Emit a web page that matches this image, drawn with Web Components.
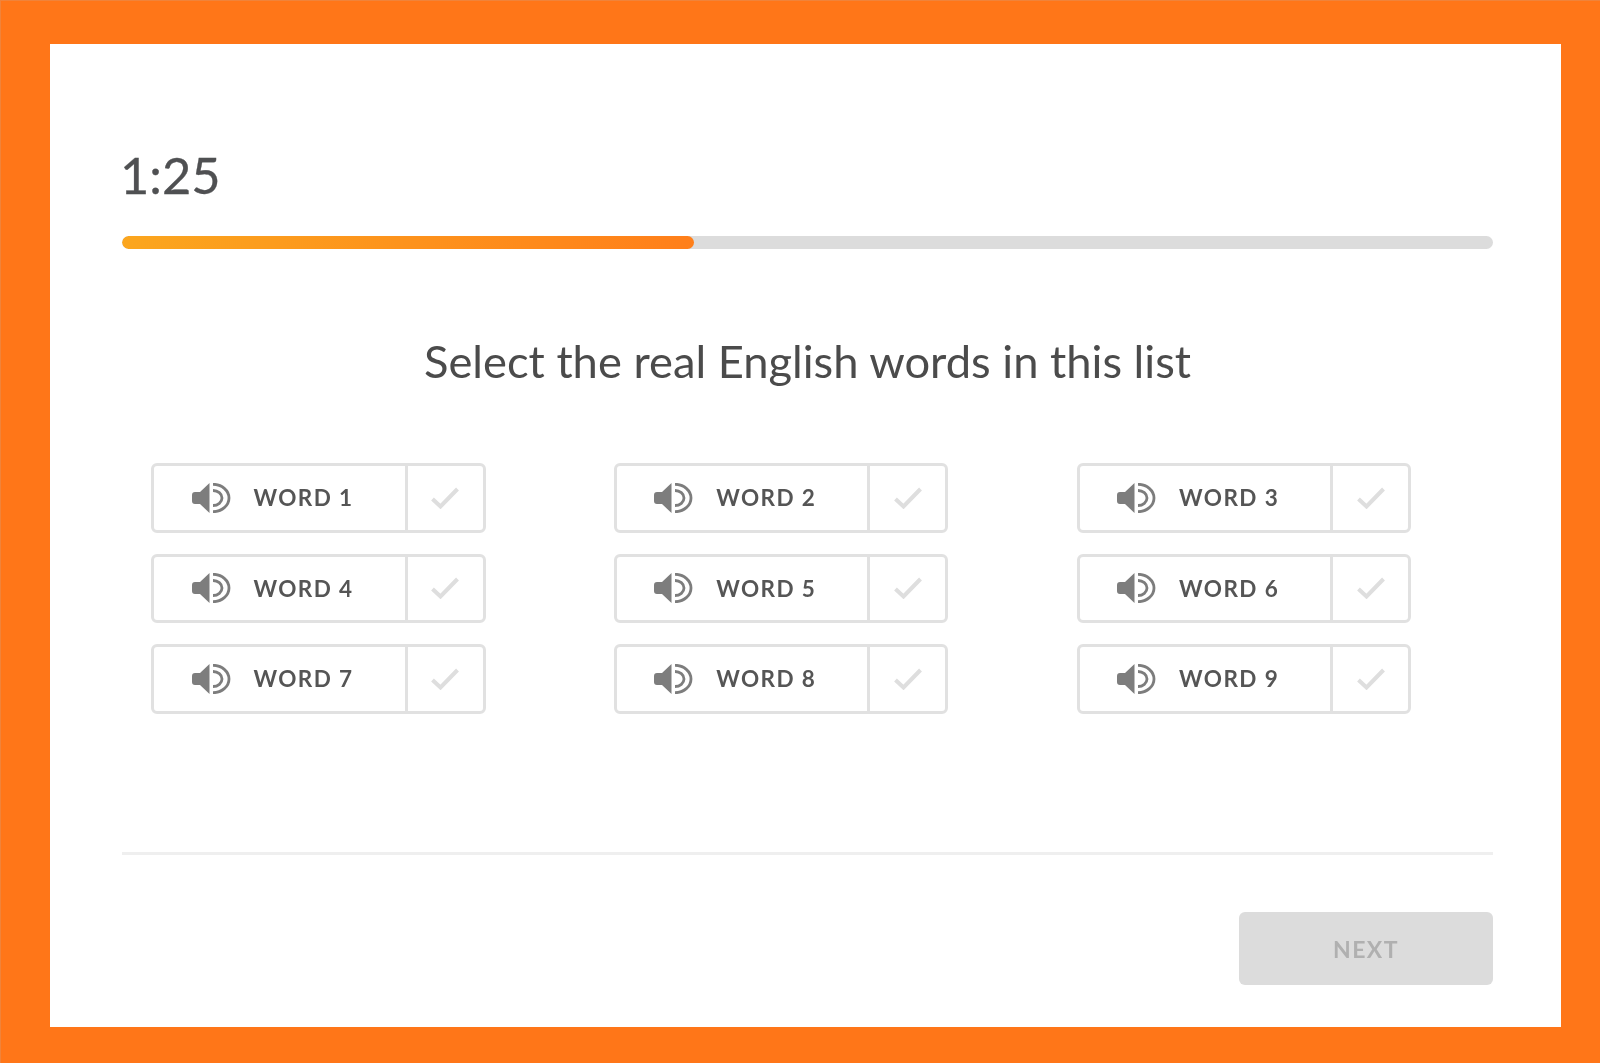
<!DOCTYPE html>
<html lang="en">
<head>
<meta charset="utf-8">
<title>Select the real English words</title>
<style>
  html, body { margin: 0; height: 100%; }
  body { background: #ff7618; font-family: Lato, "Noto Sans", sans-serif; }
</style>
</head>
<body>
<quiz-screen>
  <quiz-timer slot="timer" value="1:25" percent="41.7"></quiz-timer>
  <span slot="title">Select the real English words in this list</span>
  <word-option>WORD 1</word-option>
  <word-option>WORD 2</word-option>
  <word-option>WORD 3</word-option>
  <word-option>WORD 4</word-option>
  <word-option>WORD 5</word-option>
  <word-option>WORD 6</word-option>
  <word-option>WORD 7</word-option>
  <word-option>WORD 8</word-option>
  <word-option>WORD 9</word-option>
  <next-button slot="footer">NEXT</next-button>
</quiz-screen>

<script>
class QuizScreen extends HTMLElement {
  constructor() {
    super();
    this.attachShadow({ mode: "open" });
  }

  connectedCallback() {
    this.shadowRoot.innerHTML = `
      <style>
        :host {
          display: block;
          box-sizing: border-box;
          height: 1063px;
          padding: 44px 39px 36px 50px;
          box-shadow: inset 1px 1px 0 #f0833a;
        }
        .card {
          box-sizing: border-box;
          height: 983px;
          background: #fff;
          padding: 101px 68px 0 72px;
          display: flex;
          flex-direction: column;
          color: #4b4b4b;
          filter: blur(0.6px);
        }
        h1 {
          margin: 86px 0 0;
          font-size: 45.3px;
          line-height: 52px;
          font-weight: 400;
          text-align: center;
        }
        .grid {
          display: grid;
          grid-template-columns: repeat(3, 334.5px);
          column-gap: 128.3px;
          row-gap: 21px;
          margin: 76px 0 0 29px;
        }
        footer {
          margin-top: 138.5px;
          border-top: 3px solid #efefef;
          padding-top: 57px;
          display: flex;
          justify-content: flex-end;
        }
      </style>
      <div class="card">
        <slot name="timer"></slot>
        <h1><slot name="title"></slot></h1>
        <div class="grid"><slot></slot></div>
        <footer><slot name="footer"></slot></footer>
      </div>
    `;
  }
}

class QuizTimer extends HTMLElement {
  constructor() {
    super();
    this.attachShadow({ mode: "open" });
  }

  connectedCallback() {
    const value = this.getAttribute("value");
    const percent = this.getAttribute("percent");
    this.shadowRoot.innerHTML = `
      <style>
        :host { display: block; }
        .time {
          font-size: 50.5px;
          line-height: 60px;
          margin-left: -2px;
          color: #4f5052;
          -webkit-text-stroke: 0.3px #4f5052;
        }
        .track {
          height: 13px;
          margin-top: 31px;
          border-radius: 7px;
          background: #dcdcdc;
          overflow: hidden;
        }
        .fill {
          height: 100%;
          width: ${percent}%;
          border-radius: 7px;
          background: linear-gradient(90deg, #fba61e, #ff7f1a);
        }
      </style>
      <div class="time">${value}</div>
      <div class="track"><div class="fill"></div></div>
    `;
  }
}

class WordOption extends HTMLElement {
  constructor() {
    super();
    this.attachShadow({ mode: "open" });
  }

  connectedCallback() {
    this.shadowRoot.innerHTML = `
      <style>
        :host {
          display: flex;
          box-sizing: border-box;
          height: 69.5px;
          border: 3px solid #e1e1e1;
          border-radius: 6px;
          background: #fff;
        }
        .play {
          flex: 1;
          display: flex;
          align-items: center;
          padding-left: 37.5px;
        }
        .label {
          flex: 1;
          text-align: center;
          padding-right: 28px;
          font-size: 22.5px;
          font-weight: 700;
          letter-spacing: 1.4px;
          color: #555;
        }
        .check {
          width: 75px;
          border-left: 3px solid #e1e1e1;
          display: flex;
          align-items: center;
          justify-content: center;
        }
      </style>
      <div class="play">
        <svg width="39" height="30" viewBox="0 0 39 30">
          <path d="M17.5 0v30L8 21H3a3 3 0 0 1-3-3v-6a3 3 0 0 1 3-3h5z" fill="#7d7d7d"/>
          <path d="M21 1.3a16 13.7 0 0 1 0 27.4M21 7.5a9 7.5 0 0 1 0 15" fill="none" stroke="#7d7d7d" stroke-width="2.8"/>
        </svg>
        <span class="label"><slot></slot></span>
      </div>
      <div class="check">
        <svg width="28" height="22" viewBox="0 0 28 22">
          <path d="M1.5 12l8 7.5L26.5 2" fill="none" stroke="#dedede" stroke-width="4"/>
        </svg>
      </div>
    `;
  }
}

class NextButton extends HTMLElement {
  constructor() {
    super();
    this.attachShadow({ mode: "open" });
  }

  connectedCallback() {
    this.shadowRoot.innerHTML = `
      <style>
        :host {
          display: flex;
          align-items: center;
          justify-content: center;
          width: 254px;
          height: 73px;
          border-radius: 6px;
          background: #dcdcdc;
          color: #b0b0b0;
          font-size: 23px;
          font-weight: 700;
          letter-spacing: 1.5px;
        }
      </style>
      <slot></slot>
    `;
  }
}

customElements.define("quiz-screen", QuizScreen);
customElements.define("quiz-timer", QuizTimer);
customElements.define("word-option", WordOption);
customElements.define("next-button", NextButton);
</script>
</body>
</html>
